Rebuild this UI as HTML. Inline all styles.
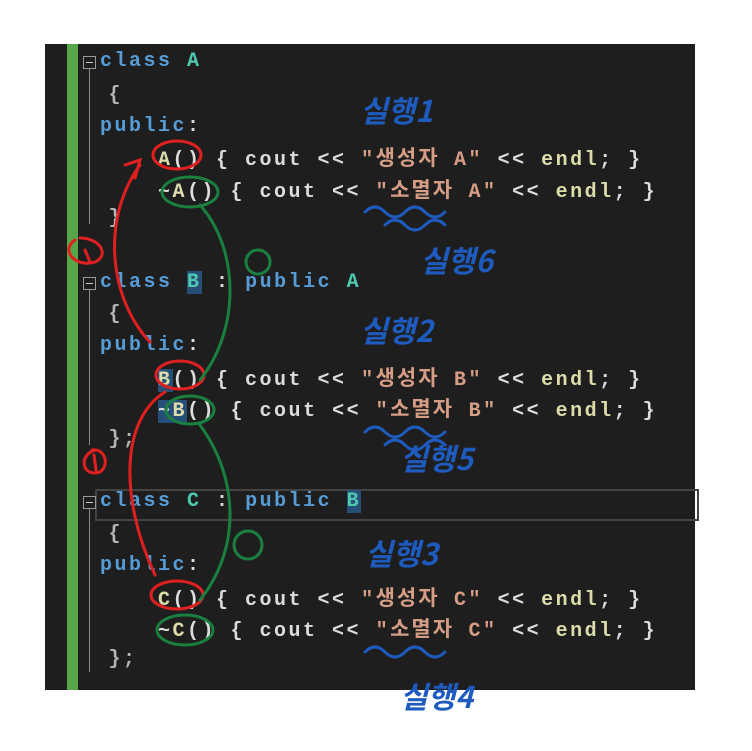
<!DOCTYPE html>
<html><head><meta charset="utf-8"><style>
body{margin:0;background:#fff;width:752px;height:751px;position:relative;overflow:hidden}
#ed{position:absolute;left:45px;top:44px;width:650px;height:646px;background:#1e1e1e}
#bar{position:absolute;left:67px;top:44px;width:11px;height:646px;background:#57a64a}
.l{position:absolute;left:100px;font:bold 20px "Liberation Mono",monospace;letter-spacing:2.5px;color:#dcdcdc;white-space:pre;line-height:22px}
.kr{font-family:"Noto Sans CJK KR",sans-serif;font-weight:bold;font-size:21px;letter-spacing:2px}
.k{color:#569cd6}.t{color:#4ec9b0}.f{color:#dcdcaa}.s{color:#d69d85}.g{color:#b4b4b4}
.box{position:absolute;width:11px;height:11px;border:1px solid #999}
.box:after{content:"";position:absolute;left:2px;top:5px;width:7px;height:1px;background:#ccc}
.vl{position:absolute;width:1px;background:#888}
.hl{position:absolute;left:95px;top:489px;width:600px;height:28px;border:2px solid #444}
.sel{background:#264f78}
</style></head><body>
<div id="ed"></div><div id="bar"></div>
<div class="hl"></div>
<div class="box" style="left:83px;top:56px"></div><div class="vl" style="left:89px;top:69px;height:155px"></div>
<div class="box" style="left:83px;top:277px"></div><div class="vl" style="left:89px;top:290px;height:155px"></div>
<div class="box" style="left:83px;top:496px"></div><div class="vl" style="left:89px;top:509px;height:163px"></div>
<div class="l" style="top:51px"><span class="k">class</span> <span class="t">A</span></div>
<div class="l g" style="top:85px;left:94px"> {</div>
<div class="l" style="top:116px"><span class="k">public</span>:</div>
<div class="l" style="top:146px">    <span class="f">A</span>() { cout &lt;&lt; <span class="s">"<span class="kr">생성자</span> A"</span> &lt;&lt; <span class="f">endl</span>; }</div>
<div class="l" style="top:178px">    ~<span class="f">A</span>() { cout &lt;&lt; <span class="s">"<span class="kr">소멸자</span> A"</span> &lt;&lt; <span class="f">endl</span>; }</div>
<div class="l g" style="top:208px;left:94px"> }</div>
<div class="l" style="top:272px"><span class="k">class</span> <span class="t sel">B</span> : <span class="k">public</span> <span class="t">A</span></div>
<div class="l g" style="top:304px;left:94px"> {</div>
<div class="l" style="top:335px"><span class="k">public</span>:</div>
<div class="l" style="top:366px">    <span class="f sel">B</span>() { cout &lt;&lt; <span class="s">"<span class="kr">생성자</span> B"</span> &lt;&lt; <span class="f">endl</span>; }</div>
<div class="l" style="top:397px">    <span class="sel">~<span class="f">B</span></span>() { cout &lt;&lt; <span class="s">"<span class="kr">소멸자</span> B"</span> &lt;&lt; <span class="f">endl</span>; }</div>
<div class="l g" style="top:429px;left:94px"> };</div>
<div class="l" style="top:491px"><span class="k">class</span> <span class="t">C</span> : <span class="k">public</span> <span class="t sel">B</span></div>
<div class="l g" style="top:524px;left:94px"> {</div>
<div class="l" style="top:555px"><span class="k">public</span>:</div>
<div class="l" style="top:586px">    <span class="f">C</span>() { cout &lt;&lt; <span class="s">"<span class="kr">생성자</span> C"</span> &lt;&lt; <span class="f">endl</span>; }</div>
<div class="l" style="top:617px">    ~<span class="f">C</span>() { cout &lt;&lt; <span class="s">"<span class="kr">소멸자</span> C"</span> &lt;&lt; <span class="f">endl</span>; }</div>
<div class="l g" style="top:649px;left:94px"> };</div>
<svg width="752" height="751" style="position:absolute;left:0;top:0" fill="none" stroke-linecap="round">
<g stroke="#e02020" stroke-width="3">
<ellipse cx="177" cy="155" rx="24" ry="14"/>
<ellipse cx="180" cy="375" rx="24" ry="14"/>
<ellipse cx="177" cy="595" rx="26" ry="14"/>
<path d="M150 342 C110 300 100 220 140 165 M125 165 L140 160 L135 178"/>
<path d="M165 392 C120 420 120 500 155 575"/>
<path d="M75 240 C60 250 75 268 95 262 C110 255 100 238 80 238 M85 250 L90 262"/>
<path d="M95 450 C78 455 82 478 100 472 C110 465 105 448 92 450 M94 455 L96 470"/>
</g>
<g stroke="#1a8040" stroke-width="3">
<ellipse cx="190" cy="192" rx="28" ry="15"/>
<ellipse cx="190" cy="410" rx="24" ry="14"/>
<ellipse cx="185" cy="630" rx="28" ry="15"/>
<path d="M200 205 C240 250 240 330 200 380"/>
<path d="M200 425 C240 480 240 550 200 600"/>
<circle cx="258" cy="262" r="12"/><circle cx="248" cy="545" r="14"/>
</g>
<g stroke="#1e5bbf" stroke-width="3">
<path d="M365 212 q10 -10 20 0 t20 0 t20 0 t20 0"/>
<path d="M385 225 q10 -10 20 0 t20 0 t20 0"/>
<path d="M365 432 q10 -10 20 0 t20 0 t20 0 t20 0"/>
<path d="M385 445 q10 -10 20 0 t20 0 t20 0"/>
<path d="M365 652 q10 -10 20 0 t20 0 t20 0 t20 0"/>
</g>
<g fill="#1e5bbf" font-family="Noto Sans CJK KR,sans-serif" font-size="30" font-weight="bold" font-style="italic">
<text x="360" y="122">실행1</text>
<text x="420" y="272">실행6</text>
<text x="360" y="342">실행2</text>
<text x="400" y="470">실행5</text>
<text x="365" y="565">실행3</text>
<text x="400" y="708">실행4</text>
</g>
</svg>
</body></html>
